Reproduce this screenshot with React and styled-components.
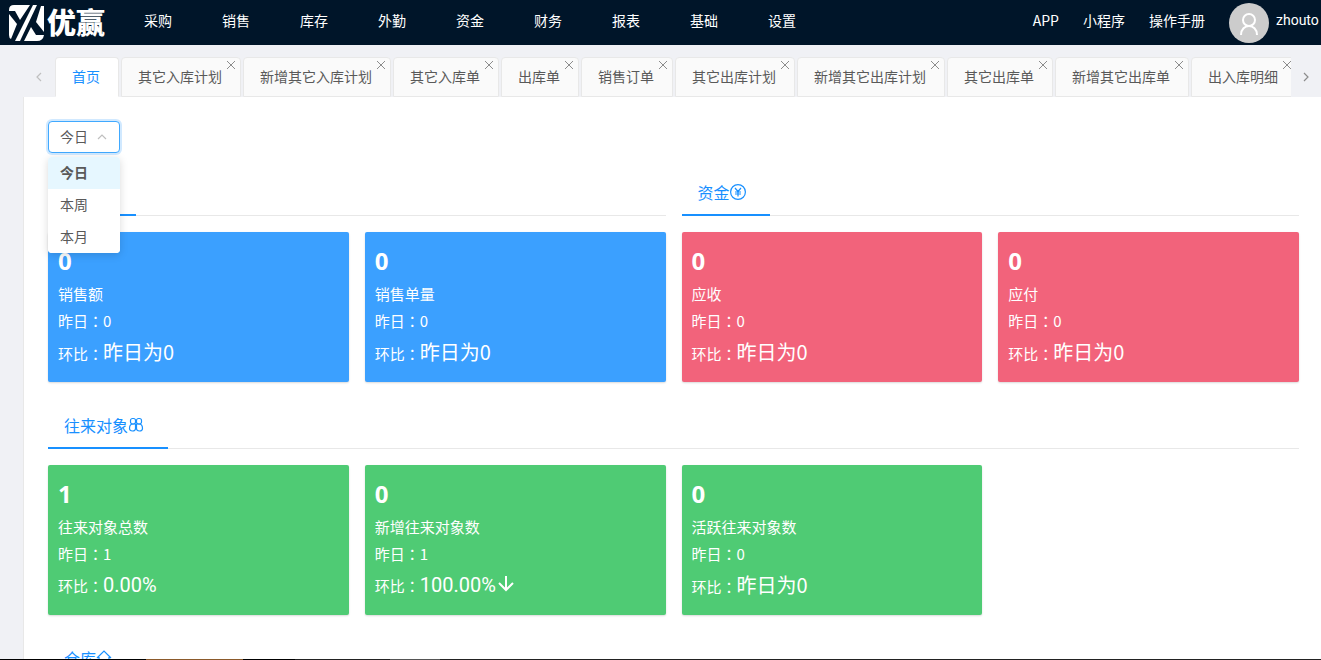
import { useState } from "react";

import styled, { createGlobalStyle } from "styled-components";

const MENU = ["采购", "销售", "库存", "外勤", "资金", "财务", "报表", "基础", "设置"];

const LINKS = ["APP", "小程序", "操作手册"];

const TABS = [
  "首页",
  "其它入库计划",
  "新增其它入库计划",
  "其它入库单",
  "出库单",
  "销售订单",
  "其它出库计划",
  "新增其它出库计划",
  "其它出库单",
  "新增其它出库单",
  "出入库明细",
];

const PERIODS = ["今日", "本周", "本月"];

const SALES = [
  { label: "销售额", value: "0", previous: "0", ratio: "昨日为0" },
  { label: "销售单量", value: "0", previous: "0", ratio: "昨日为0" },
];

const FUNDS = [
  { label: "应收", value: "0", previous: "0", ratio: "昨日为0" },
  { label: "应付", value: "0", previous: "0", ratio: "昨日为0" },
];

const PARTNERS = [
  { label: "往来对象总数", value: "1", previous: "1", ratio: "0.00%" },
  { label: "新增往来对象数", value: "0", previous: "1", ratio: "100.00%", down: true },
  { label: "活跃往来对象数", value: "0", previous: "0", ratio: "昨日为0" },
];

function LogoMark() {
  return (
    <svg width="36" height="36" viewBox="0 0 36 36" fill="#fff" aria-hidden="true">
      <path d="M5 0H21L11 15L6 6H0V5Q0 0 5 0Z" />
      <path d="M0 9L8 19L2 34Q0 33 0 30Z" />
      <path d="M24 0H28L11 36H6Z" />
      <path d="M32 1H35V27L27 17Z" />
      <path d="M15 36L22 22L27 30H35Q34 36 28 36Z" />
    </svg>
  );
}

function CloseIcon() {
  return (
    <svg width="10" height="10" viewBox="0 0 10 10" fill="none" stroke="currentColor" aria-hidden="true">
      <path d="M1 1L9 9M9 1L1 9" />
    </svg>
  );
}

function ChevronIcon({ path }) {
  return (
    <svg
      width="10"
      height="10"
      viewBox="0 0 10 10"
      fill="none"
      stroke="currentColor"
      strokeWidth="1.2"
      aria-hidden="true"
    >
      <path d={path} />
    </svg>
  );
}

function UserIcon() {
  return (
    <svg width="24" height="24" viewBox="0 0 24 24" fill="none" stroke="#fff" strokeWidth="2" aria-hidden="true">
      <circle cx="12" cy="9" r="6" />
      <path d="M4 24C4 18 8 15 12 15S20 18 20 24" />
    </svg>
  );
}

function YuanIcon() {
  return (
    <svg width="16" height="16" viewBox="0 0 16 16" fill="none" stroke="currentColor" aria-hidden="true">
      <circle cx="8" cy="8" r="7.4" strokeWidth="1.2" />
      <path d="M5 4L8 7.5L11 4M8 7.5V12.5M5 8H11M5 10H11" strokeWidth="1.2" />
    </svg>
  );
}

function CartIcon() {
  return (
    <svg width="16" height="16" viewBox="0 0 16 16" fill="none" stroke="currentColor" aria-hidden="true">
      <path d="M1 2H3L5 11H13L15 4H4" />
      <circle cx="6" cy="14" r="1" />
      <circle cx="12" cy="14" r="1" />
    </svg>
  );
}

function GroupIcon() {
  return (
    <svg
      width="16"
      height="16"
      viewBox="0 0 16 16"
      fill="none"
      stroke="currentColor"
      strokeWidth="1.2"
      aria-hidden="true"
    >
      <rect x="2.5" y="1.5" width="5" height="5.5" rx="2" />
      <rect x="8.5" y="1.5" width="5" height="5.5" rx="2" />
      <path d="M7.5 7V11.5Q7.5 14 4.5 14T1.5 11.5Q1.5 7 5 7H11Q14.5 7 14.5 11.5Q14.5 14 11.5 14T8.5 11.5V7" />
    </svg>
  );
}

function HomeIcon() {
  return (
    <svg width="16" height="16" viewBox="0 0 16 16" fill="none" stroke="currentColor" aria-hidden="true">
      <path d="M1 8L8 1L15 8M3 7V15H13V7" strokeWidth="1.2" />
    </svg>
  );
}

function ArrowDownIcon() {
  return (
    <svg width="20" height="18" viewBox="0 0 20 18" fill="none" stroke="currentColor" strokeWidth="2" aria-hidden="true">
      <path d="M10 2V16M3 9L10 16L17 9" />
    </svg>
  );
}

function AppHeader() {
  return (
    <Header>
      <Brand href="#">
        <LogoMark />
        <BrandTitle>优赢</BrandTitle>
      </Brand>
      <Menu>
        {MENU.map((item) => (
          <MenuLink href="#" key={item}>
            {item}
          </MenuLink>
        ))}
      </Menu>
      <HeaderLinks>
        {LINKS.map((item) => (
          <HeaderLink href="#" key={item}>
            {item}
          </HeaderLink>
        ))}
        <UserLink href="#">
          <Avatar>
            <UserIcon />
          </Avatar>
          <UserName>zhouto</UserName>
        </UserLink>
      </HeaderLinks>
    </Header>
  );
}

function TabBar() {
  const [active, setActive] = useState("首页");

  return (
    <Tabs>
      <TabArrow aria-label="向左">
        <ChevronIcon path="M7 1L3 5L7 9" />
      </TabArrow>
      <TabList>
        {TABS.map((tab) => (
          <Tab key={tab} $active={tab === active}>
            <TabButton $active={tab === active} onClick={() => setActive(tab)}>
              {tab}
            </TabButton>
            {tab !== "首页" && (
              <TabClose aria-label={`关闭${tab}`}>
                <CloseIcon />
              </TabClose>
            )}
          </Tab>
        ))}
      </TabList>
      <TabArrow $dark aria-label="向右">
        <ChevronIcon path="M3 1L7 5L3 9" />
      </TabArrow>
    </Tabs>
  );
}

function PeriodSelect() {
  const [period, setPeriod] = useState("今日");

  return (
    <SelectBox>
      <Select
        aria-label="时间范围"
        value={period}
        onChange={(event) => setPeriod(event.target.value)}
      >
        {PERIODS.map((item) => (
          <option key={item}>{item}</option>
        ))}
      </Select>
      <SelectArrow>
        <ChevronIcon path="M1 7L5 3L9 7" />
      </SelectArrow>
      <Options role="listbox" aria-label="时间范围">
        {PERIODS.map((item) => (
          <Option
            key={item}
            role="option"
            aria-selected={item === period}
            $selected={item === period}
            onClick={() => setPeriod(item)}
          >
            {item}
          </Option>
        ))}
      </Options>
    </SelectBox>
  );
}

function StatCard({ item, color }) {
  return (
    <Card $color={color}>
      <CardValue>{item.value}</CardValue>
      <CardText>{item.label}</CardText>
      <CardText>
        昨日<Colon>：</Colon>
        {item.previous}
      </CardText>
      <CardRatio>
        环比<Colon>：</Colon>
        <Ratio $percent={item.ratio.endsWith("%")}>{item.ratio}</Ratio>
        {item.down && <ArrowDownIcon />}
      </CardRatio>
    </Card>
  );
}

function StatSection({ title, icon, items, color, columns }) {
  return (
    <Section>
      <SectionHeader>
        <SectionTitle>
          {title}
          {icon}
        </SectionTitle>
      </SectionHeader>
      <Cards $columns={columns}>
        {items.map((item) => (
          <StatCard key={item.label} item={item} color={color} />
        ))}
      </Cards>
    </Section>
  );
}

function App() {
  return (
    <Page>
      <GlobalStyle />
      <AppHeader />
      <TabBar />
      <Main>
        <PeriodSelect />
        <SectionRow>
          <StatSection title="销售" icon={<CartIcon />} items={SALES} color="#3ba0ff" columns={2} />
          <StatSection title="资金" icon={<YuanIcon />} items={FUNDS} color="#f2637b" columns={2} />
        </SectionRow>
        <StatSection title="往来对象" icon={<GroupIcon />} items={PARTNERS} color="#4fcb74" columns={4} />
        <StatSection title="仓库" icon={<HomeIcon />} items={[]} columns={4} />
      </Main>
      <BottomEdge />
    </Page>
  );
}

const GlobalStyle = createGlobalStyle`
  * {
    box-sizing: border-box;
  }

  body {
    margin: 0;
    font-family: "Noto Sans CJK SC", sans-serif;
    font-size: 14px;
    line-height: 22px;
    color: #595959;
    background-color: #f0f2f5;
  }

  a {
    text-decoration: none;
    color: #fff;
  }

  button {
    border: none;
    padding: 0;
    background: none;
    font: inherit;
    cursor: pointer;
  }

  svg {
    display: block;
    flex: none;
  }
`;

const Page = styled.div`
  display: flex;
  flex-direction: column;
  height: 100vh;
  overflow: hidden;
  background-color: #f0f1f5;
`;

const Header = styled.header`
  display: flex;
  align-items: center;
  flex: none;
  height: 45px;
  padding-left: 9px;
  white-space: nowrap;
  overflow: hidden;
  background-color: #001529;
`;

const Brand = styled.a`
  display: flex;
  align-items: center;
  gap: 2px;
  width: 110px;
`;

const BrandTitle = styled.span`
  padding-bottom: 4px;
  font-size: 29px;
  font-weight: 900;
  line-height: 36px;
`;

const Menu = styled.nav`
  display: flex;
  flex: 1;
  padding-bottom: 5px;
`;

const MenuLink = styled.a`
  padding: 0 25px;
`;

const HeaderLinks = styled.div`
  display: flex;
  align-items: center;
  gap: 24px;
`;

const HeaderLink = styled.a`
  padding-bottom: 5px;
`;

const UserLink = styled.a`
  display: flex;
  align-items: center;
  gap: 7px;
  width: 92px;
`;

const UserName = styled.span`
  padding-bottom: 5px;
  font-family: Roboto, sans-serif;
`;

const Avatar = styled.span`
  display: flex;
  flex: none;
  align-items: center;
  justify-content: center;
  width: 40px;
  height: 40px;
  border-radius: 50%;
  background-color: #ccc;
`;

const Tabs = styled.div`
  display: flex;
  flex: none;
  height: 52px;
  padding: 12px 0 0 24px;
`;

const TabArrow = styled.button`
  display: flex;
  flex: none;
  align-items: center;
  justify-content: center;
  width: 30px;
  color: ${({ $dark }) => ($dark ? "#8c8c8c" : "#bfbfbf")};
`;

const TabList = styled.div`
  display: flex;
  flex: 1;
  gap: 2px;
  margin-left: 1px;
  overflow: hidden;
`;

const Tab = styled.div`
  position: relative;
  flex: none;
  border: 1px solid #e8e8e8;
  border-bottom-color: ${({ $active }) => ($active ? "#fff" : "#e8e8e8")};
  border-radius: 4px 4px 0 0;
  background-color: ${({ $active }) => ($active ? "#fff" : "#fafafa")};
`;

const TabButton = styled.button`
  height: 100%;
  padding: 0 18px 2px 16px;
  white-space: nowrap;
  color: ${({ $active }) => ($active ? "#1890ff" : "#595959")};
`;

const TabClose = styled.button`
  position: absolute;
  top: 2px;
  right: 4px;
  color: #8c8c8c;
`;

const Main = styled.main`
  flex: 1;
  min-height: 0;
  margin-left: 23px;
  padding: 24px 22px 0 24px;
  border-left: 1px solid #e8e8e8;
  background-color: #fff;
  overflow: hidden;
`;

const SelectBox = styled.div`
  position: relative;
  width: 72px;
  margin-bottom: 16px;
`;

const Select = styled.select`
  display: block;
  appearance: none;
  width: 100%;
  height: 32px;
  padding: 0 11px 2px;
  border: 1px solid #40a9ff;
  border-radius: 4px;
  outline: none;
  box-shadow: 0 0 0 2px rgba(24, 144, 255, 0.2);
  background-color: #fff;
  font: inherit;
  color: #595959;
`;

const SelectArrow = styled.span`
  position: absolute;
  top: 11px;
  right: 13px;
  color: #bfbfbf;
  pointer-events: none;
`;

const Options = styled.ul`
  position: absolute;
  top: 36px;
  left: 0;
  z-index: 1;
  width: 100%;
  margin: 0;
  padding: 0;
  list-style: none;
  border-radius: 4px;
  box-shadow: 0 2px 8px rgba(0, 0, 0, 0.15);
  background-color: #fff;
  overflow: hidden;
`;

const Option = styled.li`
  padding: 4px 12px 6px;
  font-weight: ${({ $selected }) => ($selected ? 600 : 400)};
  background-color: ${({ $selected }) => ($selected ? "#e6f7ff" : "#fff")};
  cursor: pointer;
`;

const SectionRow = styled.div`
  display: grid;
  grid-template-columns: 1fr 1fr;
  gap: 16px;
`;

const Section = styled.section`
  margin-bottom: 20px;
`;

const SectionHeader = styled.div`
  display: flex;
  height: 47px;
  margin-bottom: 16px;
  box-shadow: inset 0 -1px 0 #e8e8e8;
`;

const SectionTitle = styled.h2`
  display: flex;
  align-items: center;
  margin: 0;
  padding: 0 24px 0 16px;
  border-bottom: 2px solid #1890ff;
  font-size: 16px;
  font-weight: 400;
  color: #1890ff;
`;

const Cards = styled.div`
  display: grid;
  grid-template-columns: repeat(${({ $columns }) => $columns}, 1fr);
  gap: 16px;
`;

const Card = styled.article`
  height: 150px;
  padding: 13px 10px;
  border-radius: 2px;
  box-shadow: 0 1px 2px rgba(0, 0, 0, 0.15);
  background-color: ${({ $color }) => $color};
  font-size: 15px;
  line-height: 27px;
  color: #fff;
`;

const CardValue = styled.div`
  margin-bottom: 3px;
  font-family: "Open Sans", sans-serif;
  font-size: 24px;
  font-weight: 700;
  line-height: 32px;
`;

const CardText = styled.div``;

const CardRatio = styled.div`
  display: flex;
  align-items: baseline;
  line-height: 36px;
`;

const Colon = styled.span`
  font-family: "Noto Sans CJK TC", sans-serif;
`;

const Ratio = styled.span`
  font-family: ${({ $percent }) => ($percent ? "Roboto" : '"Noto Sans CJK SC"')}, sans-serif;
  font-size: 20px;
`;

const BottomEdge = styled.footer`
  flex: none;
  height: 1px;
  background: linear-gradient(
    to right,
    #000 146px,
    #8b5a2b 146px 243px,
    #000 243px 295px,
    #222 295px 390px,
    #555 390px 440px,
    #222 440px
  );
`;

export default App;
